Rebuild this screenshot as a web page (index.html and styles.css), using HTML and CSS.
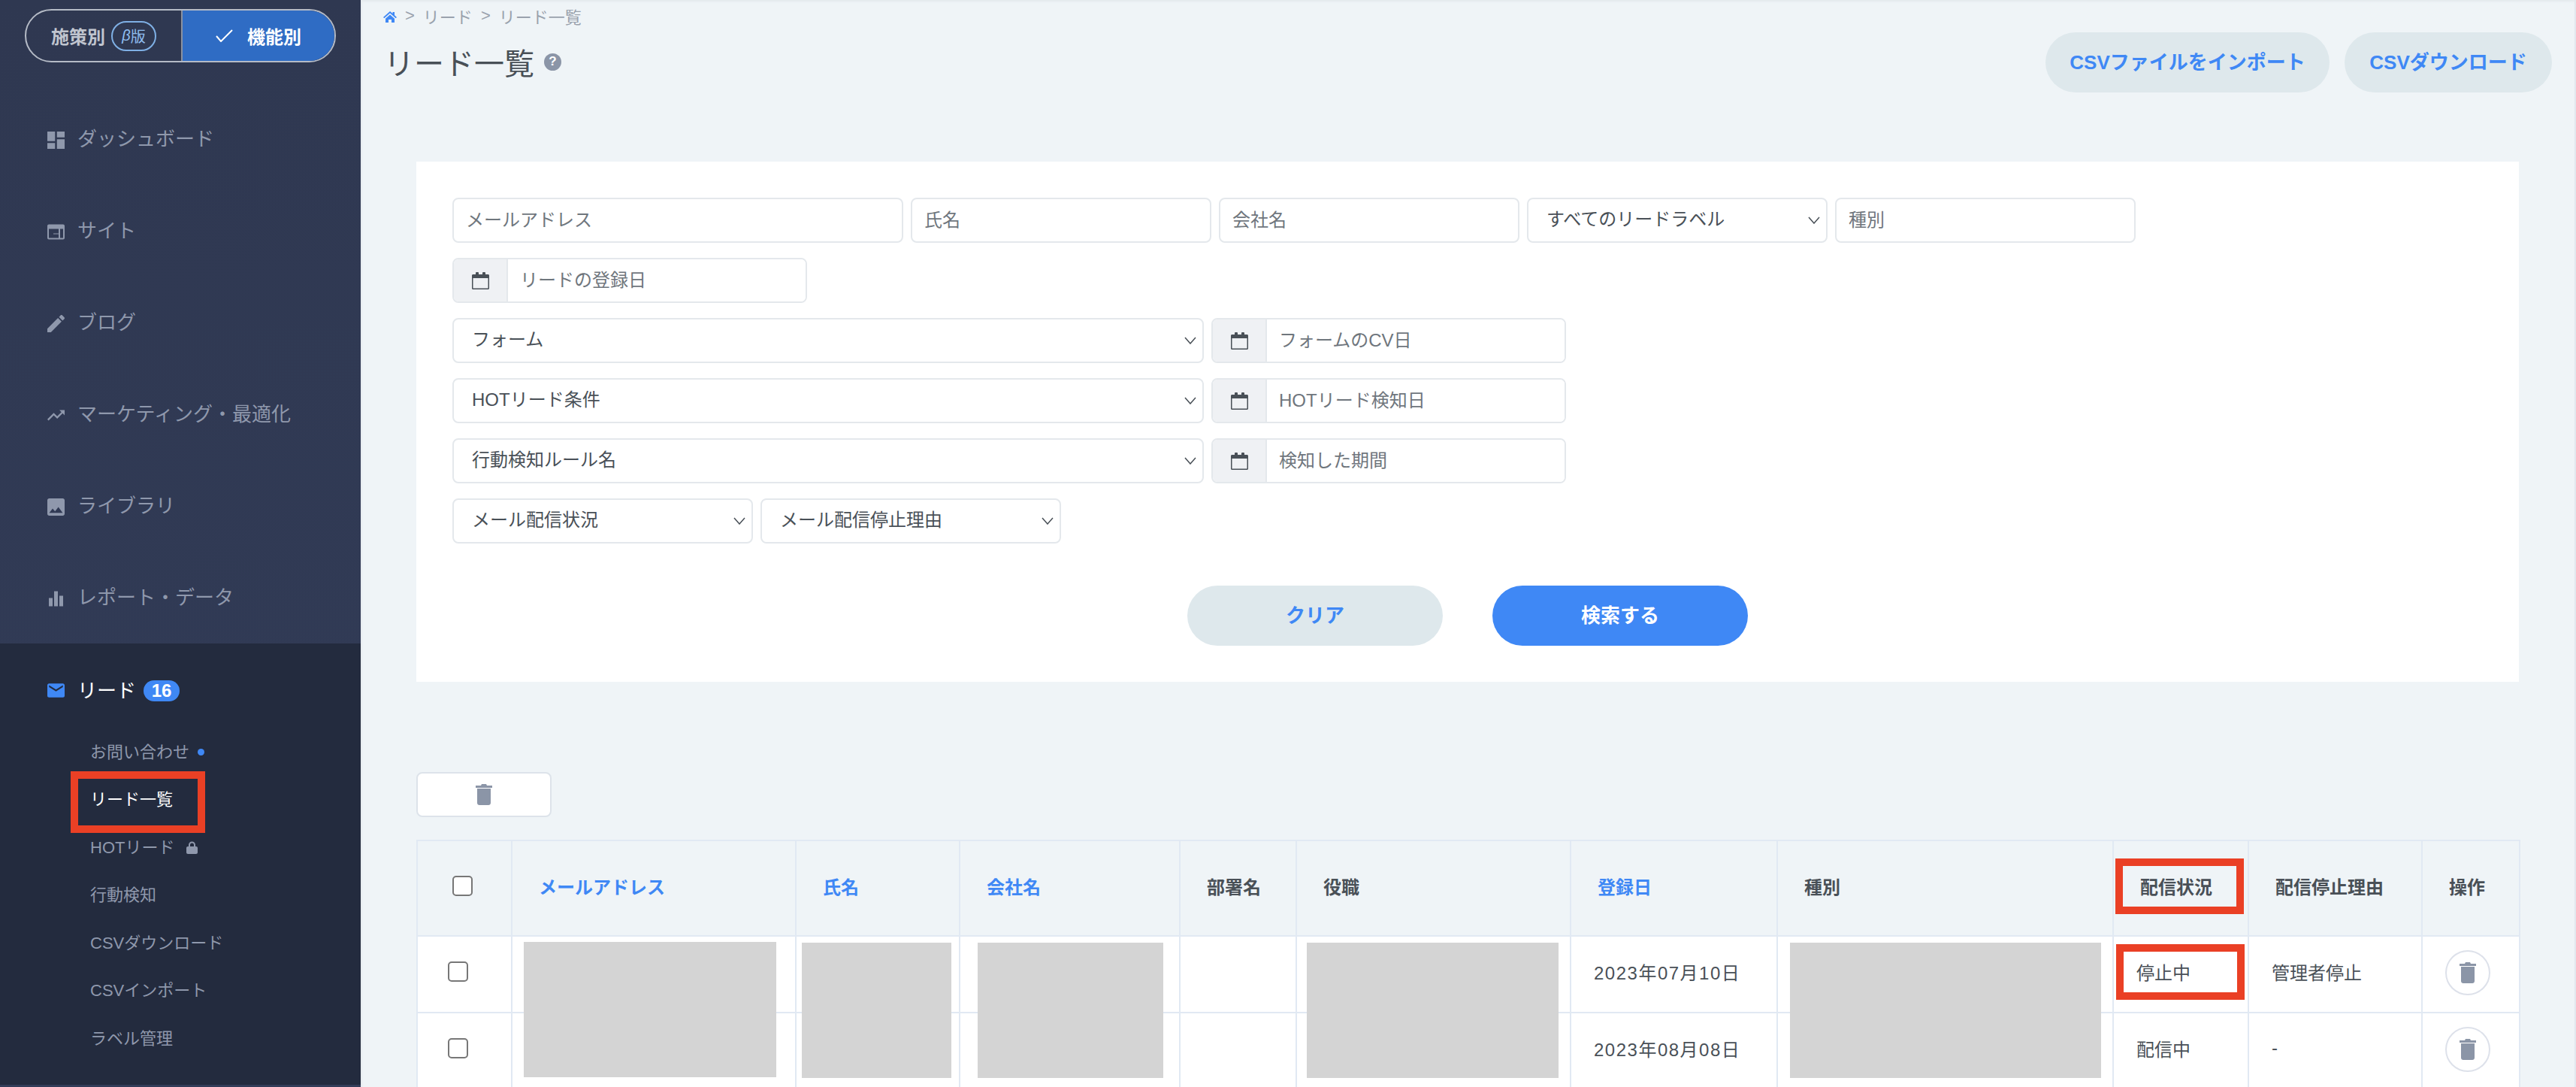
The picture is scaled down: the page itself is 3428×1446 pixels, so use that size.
FILE: index.html
```html
<!DOCTYPE html>
<html lang="ja">
<head>
    <meta charset="UTF-8">
    <meta name="viewport" content="width=device-width, initial-scale=1.0">
    <title>リード一覧</title>
    <link rel="stylesheet" href="styles.css">
</head>
<body>
    <svg class="sprite" xmlns="http://www.w3.org/2000/svg">
        <symbol id="icon-trash" viewBox="0 0 22 28">
            <path d="M8 0h6l1 2h7v3H0V2h7z"/>
            <path d="M2 6h18v19c0 1.7-1.3 3-3 3H5c-1.700 0-3-1.300-3-3z"/>
        </symbol>
        <symbol id="icon-calendar" viewBox="0 0 23 23">
            <path d="M5 3V1.500a2 2 0 0 1 4 0V3h5V1.500a2 2 0 0 1 4 0V3h3.500c.8 0 1.500.7 1.500 1.500v17c0 .8-.7 1.500-1.500 1.500h-20C.7 23 0 22.300 0 21.500v-17C0 3.700.7 3 1.500 3zM1.500 8v13.500h20V8z" fill-rule="evenodd"/>
        </symbol>
    </svg>

    <aside class="sidebar">
        <div class="mode-toggle">
            <div class="mode-item">施策別<span class="beta"><i>β</i>版</span></div>
            <div class="mode-item active">
                <svg class="check" viewBox="0 0 23 17"><path d="M1 9l6 7L22 1" fill="none" stroke="currentColor" stroke-width="2"/></svg>
                機能別
            </div>
        </div>

        <nav class="nav">
            <a class="nav-item">
                <svg class="nav-icon" viewBox="3 3 18 18"><path d="M3 13h8V3H3v10zm0 8h8v-6H3v6zm10 0h8V11h-8v10zm0-18v6h8V3h-8z"/></svg>
                ダッシュボード
            </a>
            <a class="nav-item">
                <svg class="nav-icon" viewBox="0 0 23 20"><path fill-rule="evenodd" d="M2 0h19a2 2 0 0 1 2 2v16a2 2 0 0 1-2 2H2a2 2 0 0 1-2-2V2a2 2 0 0 1 2-2zm0 6v12h13v-5H8v-1h7V6zm15 0v12h4V6z"/></svg>
                サイト
            </a>
            <a class="nav-item">
                <svg class="nav-icon" viewBox="3 3 18 18"><path d="M3 17.250V21h3.750L17.810 9.940l-3.750-3.750L3 17.250zM20.710 7.040c.39-.39.39-1.020 0-1.410l-2.340-2.340c-.39-.39-1.020-.39-1.410 0l-1.830 1.830 3.750 3.750 1.830-1.830z"/></svg>
                ブログ
            </a>
            <a class="nav-item">
                <svg class="nav-icon" viewBox="2 6 20 12"><path d="M16 6l2.290 2.290-4.880 4.880-4-4L2 16.590 3.410 18l6-6 4 4 6.300-6.290L22 12V6z"/></svg>
                マーケティング・最適化
            </a>
            <a class="nav-item">
                <svg class="nav-icon" viewBox="3 3 18 18"><path d="M21 19V5c0-1.100-.9-2-2-2H5c-1.100 0-2 .9-2 2v14c0 1.100.9 2 2 2h14c1.100 0 2-.9 2-2zM8.500 13.500l2.500 3.010L14.500 12l4.500 6H5l3.500-4.500z"/></svg>
                ライブラリ
            </a>
            <a class="nav-item">
                <svg class="nav-icon" viewBox="0 0 23 20"><path d="M2 9h5v11H2zM9 0h5v20H9zM16 6h5v14h-5z"/></svg>
                レポート・データ
            </a>
        </nav>

        <div class="nav-section">
            <a class="nav-item lead">
                <svg class="nav-icon" viewBox="2 4 20 16"><path d="M20 4H4c-1.100 0-2 .9-2 2v12c0 1.100.9 2 2 2h16c1.100 0 2-.9 2-2V6c0-1.100-.9-2-2-2zm0 4l-8 5-8-5V6l8 5 8-5v2z"/></svg>
                リード<span class="count">16</span>
            </a>
            <ul class="sub-nav">
                <li>お問い合わせ<span class="dot"></span></li>
                <li class="current">リード一覧<span class="mark-side"></span></li>
                <li>HOTリード
                    <svg class="lock" viewBox="0 0 15 17"><path fill-rule="evenodd" d="M3 7V5a4.500 4.500 0 0 1 9 0v2h1c1.100 0 2 .9 2 2v6c0 1.100-.9 2-2 2H2c-1.100 0-2-.9-2-2V9c0-1.100.9-2 2-2zm2 0h5V5a2.500 2.500 0 0 0-5 0z"/></svg>
                </li>
                <li>行動検知</li>
                <li>CSVダウンロード</li>
                <li>CSVインポート</li>
                <li>ラベル管理</li>
            </ul>
        </div>
    </aside>

    <main class="main">
        <div class="page-head">
            <div>
                <div class="breadcrumb">
                    <svg class="home" viewBox="0 0 18 15"><path d="M9 0l3.500 3V1h2.500v4.200L18 8l-1.300 1.300L9 2.600 1.300 9.300 0 8zM3 9.700L9 4.500l6 5.200V15h-4v-4H7v4H3z"/></svg>
                    <span>&gt;</span><span>リード</span><span>&gt;</span><span>リード一覧</span>
                </div>
                <h1 class="page-title">リード一覧<span class="help">?</span></h1>
            </div>
            <div class="head-actions">
                <button class="btn btn-light btn-import">CSVファイルをインポート</button>
                <button class="btn btn-light btn-download">CSVダウンロード</button>
            </div>
        </div>

        <form class="search-card">
            <div class="form-row">
                <input class="field w-600" placeholder="メールアドレス">
                <input class="field w-400" placeholder="氏名">
                <input class="field w-400" placeholder="会社名">
                <select class="field select w-400"><option>すべてのリードラベル</option></select>
                <input class="field w-400" placeholder="種別">
            </div>
            <div class="form-row">
                <div class="date-group">
                    <span class="addon"><svg class="calendar"><use href="#icon-calendar"/></svg></span>
                    <input class="date-input" placeholder="リードの登録日">
                </div>
            </div>
            <div class="form-row">
                <select class="field select w-1000"><option>フォーム</option></select>
                <div class="date-group">
                    <span class="addon"><svg class="calendar"><use href="#icon-calendar"/></svg></span>
                    <input class="date-input" placeholder="フォームのCV日">
                </div>
            </div>
            <div class="form-row">
                <select class="field select w-1000"><option>HOTリード条件</option></select>
                <div class="date-group">
                    <span class="addon"><svg class="calendar"><use href="#icon-calendar"/></svg></span>
                    <input class="date-input" placeholder="HOTリード検知日">
                </div>
            </div>
            <div class="form-row">
                <select class="field select w-1000"><option>行動検知ルール名</option></select>
                <div class="date-group">
                    <span class="addon"><svg class="calendar"><use href="#icon-calendar"/></svg></span>
                    <input class="date-input" placeholder="検知した期間">
                </div>
            </div>
            <div class="form-row">
                <select class="field select w-400"><option>メール配信状況</option></select>
                <select class="field select w-400"><option>メール配信停止理由</option></select>
            </div>
            <div class="form-actions">
                <button type="button" class="btn btn-light btn-wide">クリア</button>
                <button type="button" class="btn btn-primary btn-wide">検索する</button>
            </div>
        </form>

        <button class="bulk-delete"><svg class="trash"><use href="#icon-trash"/></svg></button>

        <div class="table-wrap">
            <table class="lead-table">
                <colgroup>
                    <col class="c-check"><col class="c-mail"><col class="c-name"><col class="c-company">
                    <col class="c-dept"><col class="c-role"><col class="c-date"><col class="c-type">
                    <col class="c-status"><col class="c-reason"><col class="c-ops">
                </colgroup>
                <thead>
                    <tr>
                        <th class="check-head"><input type="checkbox" class="check-box"></th>
                        <th class="sortable">メールアドレス</th>
                        <th class="sortable">氏名</th>
                        <th class="sortable">会社名</th>
                        <th>部署名</th>
                        <th>役職</th>
                        <th class="sortable">登録日</th>
                        <th>種別</th>
                        <th>配信状況</th>
                        <th>配信停止理由</th>
                        <th>操作</th>
                    </tr>
                </thead>
                <tbody>
                    <tr>
                        <td class="check-cell"><input type="checkbox" class="check-box"></td>
                        <td></td><td></td><td></td><td></td><td></td>
                        <td class="date">2023年07月10日</td>
                        <td></td>
                        <td>停止中</td>
                        <td>管理者停止</td>
                        <td class="ops"><button class="row-delete"><svg class="trash"><use href="#icon-trash"/></svg></button></td>
                    </tr>
                    <tr>
                        <td class="check-cell"><input type="checkbox" class="check-box"></td>
                        <td></td><td></td><td></td><td></td><td></td>
                        <td class="date">2023年08月08日</td>
                        <td></td>
                        <td>配信中</td>
                        <td>-</td>
                        <td class="ops"><button class="row-delete"><svg class="trash"><use href="#icon-trash"/></svg></button></td>
                    </tr>
                </tbody>
            </table>
            <!-- 個人情報の目隠し -->
            <div class="mask mask-mail"></div>
            <div class="mask mask-name"></div>
            <div class="mask mask-company"></div>
            <div class="mask mask-role"></div>
            <div class="mask mask-type"></div>
            <!-- 注釈の赤枠 -->
            <div class="mark mark-head"></div>
            <div class="mark mark-cell"></div>
        </div>
    </main>
</body>
</html>
```

FILE: styles.css
```css
:root {
    --blue: #3f88f5;
    --light-btn: #dee8ec;
    --page-bg: #eff4f7;
    --text: #495057;
    --nav-text: #8f98ac;
    --line: #e1e9f3;
    --field-line: #e4e8ec;
    --red: #ea4025;
    --icon-grey: #8b95a7;
}

* {
    box-sizing: border-box;
}

html, body {
    height: 100%;
}

body {
    margin: 0;
    display: flex;
    overflow: hidden;
    background: var(--page-bg);
    color: var(--text);
    font-family: "Liberation Sans", "Noto Sans CJK JP", sans-serif;
    font-size: 24px;
}

.sprite {
    display: none;
}

/* sidebar */
.sidebar {
    flex: 0 0 480px;
    background: linear-gradient(180deg, #2f3851 0%, #323c58 100%);
}

.mode-toggle {
    display: flex;
    width: 414px;
    height: 71px;
    margin: 12px 0 40px 33px;
    border: 2px solid #b5bbc6;
    border-radius: 36px;
    overflow: hidden;
}

.mode-item {
    display: flex;
    align-items: center;
    justify-content: center;
    width: 208px;
    border-right: 2px solid #8a91a0;
    font-weight: 700;
    color: #c0c5cf;
}

.mode-item.active {
    flex: 1;
    gap: 19px;
    border-right: none;
    background: #2f6cc4;
    color: #fff;
}

.beta {
    display: flex;
    align-items: center;
    justify-content: center;
    width: 60px;
    height: 40px;
    margin-left: 8px;
    border: 2px solid #7fb0e5;
    border-radius: 20px;
    color: #8fbef0;
    font-size: 20px;
    font-weight: 400;
}

.check {
    width: 23px;
    height: 17px;
}

.nav-item {
    display: flex;
    align-items: center;
    height: 122px;
    padding: 0 0 4px 63px;
    color: var(--nav-text);
    font-size: 26px;
}

.nav-icon {
    flex: 0 0 23px;
    width: 23px;
    height: 23px;
    margin: 9px 17px 0 0;
    fill: var(--nav-text);
}

.nav-section {
    height: 587px;
    margin-top: 1px;
    background: #232b3e;
}

.nav-item.lead {
    height: 113px;
    padding-top: 11px;
    color: #fff;
}

.lead .nav-icon {
    margin-top: 4px;
    fill: var(--blue);
}

.count {
    display: flex;
    align-items: center;
    justify-content: center;
    width: 48px;
    height: 28px;
    margin: 6px 0 0 10px;
    border-radius: 14px;
    background: var(--blue);
    font-size: 24px;
    font-weight: 700;
}

.sub-nav {
    margin: 0;
    padding: 0;
    list-style: none;
}

.sub-nav li {
    position: relative;
    display: flex;
    align-items: center;
    height: 63.5px;
    padding: 0 0 6px 120px;
    color: var(--nav-text);
    font-size: 22px;
}

.sub-nav li.current {
    color: #fff;
}

.dot {
    width: 9px;
    height: 9px;
    margin: 6px 0 0 11px;
    border-radius: 50%;
    background: var(--blue);
}

.lock {
    width: 15px;
    height: 17px;
    margin: 6px 0 0 16px;
    fill: var(--nav-text);
}

.mark-side {
    position: absolute;
    left: 94px;
    top: -7px;
    width: 179px;
    height: 82px;
    border: 10px solid var(--red);
}

/* main */
.main {
    flex: 1;
    min-width: 0;
    border-left: 2px solid #e7ecf0;
    border-right: 2px solid #e3e8ee;
    box-shadow: inset 0 3px 3px -1px #e4e9ed;
}

.page-head {
    display: flex;
    justify-content: space-between;
    height: 215px;
    padding: 7px 30px 0 26px;
}

.breadcrumb {
    display: flex;
    align-items: center;
    gap: 11px;
    height: 30px;
    padding: 0 0 3px 2px;
    color: #9aa2ad;
    font-size: 22px;
}

.home {
    width: 18px;
    height: 15px;
    margin-top: 4px;
    fill: var(--blue);
}

.page-title {
    display: flex;
    align-items: center;
    height: 60px;
    margin: 15px 0 0 3px;
    font-size: 40px;
    font-weight: 400;
}

.help {
    display: flex;
    align-items: center;
    justify-content: center;
    width: 23px;
    height: 23px;
    margin-left: 13px;
    border-radius: 50%;
    background: var(--icon-grey);
    color: #fff;
    font-size: 17px;
    font-weight: 700;
}

.head-actions {
    display: flex;
    gap: 20px;
    margin-top: 36px;
}

.btn {
    height: 80px;
    padding: 0 0 5px;
    border: none;
    border-radius: 40px;
    font-family: inherit;
    font-size: 26px;
    font-weight: 700;
}

.btn-light {
    background: var(--light-btn);
    color: var(--blue);
}

.btn-primary {
    background: var(--blue);
    color: #fff;
}

.btn-import {
    width: 378px;
}

.btn-download {
    width: 276px;
}

.btn-wide {
    width: 340px;
}

.search-card {
    margin: 0 74px 0 72px;
    padding: 48px;
    background: #fff;
}

.form-row {
    display: flex;
    gap: 10px;
    margin-bottom: 20px;
}

.form-actions {
    display: flex;
    justify-content: center;
    gap: 66px;
    margin-top: 56px;
}

.field {
    height: 60px;
    padding: 0 16px;
    border: 2px solid var(--field-line);
    border-radius: 8px;
    background: #fff;
    color: var(--text);
    font-family: inherit;
    font-size: 24px;
}

.field::placeholder,
.date-input::placeholder {
    color: #6f767d;
}

.select {
    padding: 0 30px 3px 24px;
    appearance: none;
    -webkit-appearance: none;
    background-image: url("data:image/svg+xml,%3Csvg xmlns='http://www.w3.org/2000/svg' viewBox='0 0 16 10'%3E%3Cpath d='M1 1l7 8 7-8' fill='none' stroke='%23495057' stroke-width='1.500'/%3E%3C/svg%3E");
    background-repeat: no-repeat;
    background-position: right 8px center;
    background-size: 16px 10px;
}

.w-400 { width: 400px; }
.w-600 { width: 600px; }
.w-1000 { width: 1000px; }

.date-group {
    display: flex;
    width: 472px;
    height: 60px;
    border: 2px solid var(--field-line);
    border-radius: 8px;
    overflow: hidden;
}

.addon {
    display: flex;
    align-items: center;
    justify-content: center;
    flex: 0 0 72px;
    border-right: 2px solid var(--field-line);
    background: #eff1f4;
}

.calendar {
    width: 23px;
    height: 23px;
    fill: var(--text);
}

.date-input {
    flex: 1;
    min-width: 0;
    padding: 0 16px;
    border: none;
    font-family: inherit;
    font-size: 24px;
}

.bulk-delete {
    display: flex;
    align-items: center;
    justify-content: center;
    width: 180px;
    height: 60px;
    margin: 120px 0 30px 72px;
    border: 2px solid #dde3ea;
    border-radius: 8px;
    background: #fff;
}

.trash {
    width: 22px;
    height: 28px;
    fill: var(--icon-grey);
}

/* table */
.table-wrap {
    position: relative;
    width: 2798px;
    margin-left: 72px;
}

.lead-table {
    width: 2798px;
    table-layout: fixed;
    border-collapse: collapse;
}

.c-check { width: 126px; }
.c-mail { width: 378px; }
.c-name { width: 218px; }
.c-company { width: 293px; }
.c-dept { width: 155px; }
.c-role { width: 365px; }
.c-date { width: 275px; }
.c-type { width: 447px; }
.c-status { width: 180px; }
.c-reason { width: 231px; }
.c-ops { width: 130px; }

.lead-table th,
.lead-table td {
    border: 2px solid var(--line);
    text-align: left;
}

.lead-table th {
    height: 127px;
    padding: 0 0 6px 35px;
    font-size: 24px;
    font-weight: 700;
}

.lead-table th.sortable {
    color: var(--blue);
}

.lead-table td {
    height: 102px;
    padding: 0 0 8px 30px;
    background: #fff;
}

.lead-table td.date {
    letter-spacing: 1.5px;
}

.lead-table th.check-head {
    padding: 0 0 7px 46px;
}

.lead-table td.check-cell {
    padding: 0 0 8px 40px;
}

.lead-table td.ops {
    padding-bottom: 4px;
}

.check-box {
    display: block;
    width: 27px;
    height: 27px;
    margin: 0;
    border: 2px solid #777;
    border-radius: 5px;
    background: #fff;
    appearance: none;
    -webkit-appearance: none;
}

.row-delete {
    display: flex;
    align-items: center;
    justify-content: center;
    width: 60px;
    height: 60px;
    padding: 0;
    border: 2px solid #dde1ea;
    border-radius: 50%;
    background: #fff;
}

.mask {
    position: absolute;
    top: 137px;
    height: 180px;
    background: #d4d4d4;
}

.mask-mail { left: 143px; top: 136px; width: 336px; }
.mask-name { left: 513px; width: 199px; }
.mask-company { left: 747px; width: 247px; }
.mask-role { left: 1185px; width: 335px; }
.mask-type { left: 1828px; width: 414px; }

.mark {
    position: absolute;
    width: 171px;
    height: 74px;
    border: 10px solid var(--red);
}

.mark-head { left: 2261px; top: 25px; }
.mark-cell { left: 2262px; top: 139px; }
```
